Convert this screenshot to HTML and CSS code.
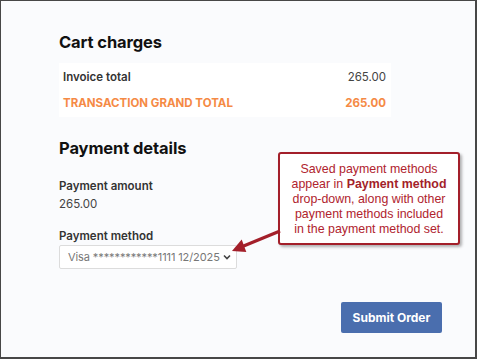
FILE: index.html
```html
<!DOCTYPE html>
<html lang="en-US">

<head>
    <meta charset="UTF-8">
    <meta name="viewport" content="width=device-width, initial-scale=1">
    <title>Payment details</title>
    <link rel="stylesheet" href="styles.css">
</head>

<body>
    <div class="frame">
        <div class="content">
            <h2 class="section-title">Cart charges</h2>
            <div class="charges">
                <div class="charge-row">
                    <span class="charge-label">Invoice total</span>
                    <span class="charge-value">265.00</span>
                </div>
                <div class="charge-row grand">
                    <span class="charge-label">TRANSACTION GRAND TOTAL</span>
                    <span class="charge-value">265.00</span>
                </div>
            </div>

            <h2 class="section-title payment-title">Payment details</h2>
            <div class="field">
                <div class="field-label">Payment amount</div>
                <div class="field-value">265.00</div>
            </div>
            <div class="field method">
                <div class="field-label">Payment method</div>
                <div class="select">
                    <span class="select-text">Visa ************1111 12/2025</span>
                    <svg class="chevron" width="8" height="6" viewBox="0 0 8 6">
                        <path d="M1 1.5 L4 4.5 L7 1.5" fill="none" stroke="#444" stroke-width="1.6" />
                    </svg>
                </div>
            </div>
        </div>

        <div class="actions">
            <button class="submit-btn">Submit Order</button>
        </div>

        <div class="callout">
            Saved payment methods<br>
            appear in <b>Payment method</b><br>
            drop-down, along with other<br>
            payment methods included<br>
            in the payment method set.
        </div>
        <svg class="callout-arrow" width="56" height="34" viewBox="0 0 56 34">
            <line x1="53" y1="9" x2="16" y2="24.3" stroke="#a31f2a" stroke-width="3.2" />
            <polygon points="5,29 19.3,30 14.7,17.6" fill="#a31f2a" />
        </svg>
    </div>
</body>

</html>
```

FILE: styles.css
```css
body,
html {
    margin: 0;
}

body {
    font-family: "Inter", "Open Sans", sans-serif;
    color: #222;
}

.frame {
    position: relative;
    box-sizing: border-box;
    width: 477px;
    height: 359px;
    background: #fafbfd;
    border-style: solid;
    border-color: #474747;
    border-width: 1px 2px 2px 1px;
}

.content {
    width: 332px;
    padding: 29px 0 0 58px;
}

.section-title {
    margin: 0;
    font-size: 16.5px;
    line-height: 24px;
    font-weight: 700;
    color: #111;
    letter-spacing: -0.1px;
}

.charges {
    margin-top: 9px;
    background: #fff;
    padding: 1px 5px 1px 4px;
}

.charge-row {
    display: flex;
    justify-content: space-between;
    align-items: center;
    height: 26px;
    font-size: 11.5px;
}

.charge-label {
    font-weight: 600;
    color: #333;
}

.charge-value {
    color: #444;
}

.grand .charge-label,
.grand .charge-value {
    color: #f58a45;
    font-weight: 700;
}

.payment-title {
    margin-top: 19px;
}

.field {
    margin-top: 17px;
    font-size: 11.5px;
    line-height: 18px;
}

.field-label {
    font-weight: 600;
    color: #333;
}

.field-value {
    color: #444;
}

.method {
    margin-top: 14px;
}

.select {
    box-sizing: border-box;
    width: 178px;
    height: 24px;
    display: flex;
    align-items: center;
    justify-content: space-between;
    padding: 0 5px 0 8px;
    background: #fff;
    border: 1px solid #dcdcdc;
    border-radius: 2px;
    color: #777;
    font-size: 11px;
}

.select-text {
    white-space: nowrap;
    letter-spacing: -0.1px;
}

.actions {
    display: flex;
    justify-content: flex-end;
    padding: 33px 33px 0 0;
}

.submit-btn {
    width: 101px;
    height: 31px;
    border: none;
    border-radius: 2px;
    background: #4a6eae;
    color: #fff;
    font-family: inherit;
    font-weight: 700;
    font-size: 12px;
}

.callout {
    position: absolute;
    left: 277px;
    top: 151px;
    box-sizing: border-box;
    width: 182px;
    height: 93px;
    padding: 8px 0 0;
    background: #fff;
    border: 2px solid #a31f2a;
    border-radius: 3px;
    box-shadow: 2px 2px 3px rgba(0, 0, 0, 0.3);
    color: #b0232e;
    font-family: "Liberation Sans", Arial, sans-serif;
    font-size: 12.4px;
    line-height: 15px;
    text-align: center;
    white-space: nowrap;
}

.callout b {
    color: #a31f2a;
}

.callout-arrow {
    position: absolute;
    left: 226px;
    top: 221px;
}
```
